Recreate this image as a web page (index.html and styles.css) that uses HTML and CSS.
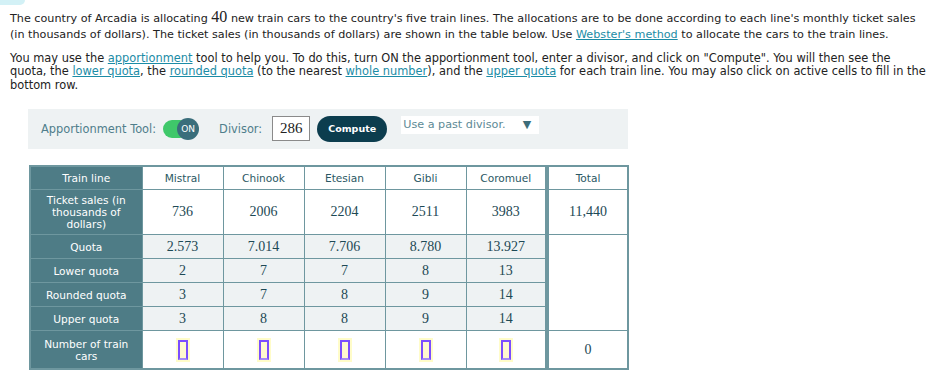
FILE: index.html
```html
<!DOCTYPE html>
<html lang="en">
<head>
  <meta charset="UTF-8" />
  <title>Webster's method</title>
  <link rel="stylesheet" href="styles.css">
</head>
<body>
  <div class="tab-edge"></div>

  <!-- Question text -->
  <p class="intro">The country of Arcadia is allocating <span class="num">40</span> new train cars to the country's five train lines. The allocations are to be done according to each line's monthly ticket sales (in thousands of dollars). The ticket sales (in thousands of dollars) are shown in the table below. Use <a href="#">Webster's method</a> to allocate the cars to the train lines.</p>

  <p class="help">You may use the <a href="#">apportionment</a> tool to help you. To do this, turn ON the apportionment tool, enter a divisor, and click on "Compute". You will then see the quota, the <a href="#">lower quota</a>, the <a href="#">rounded quota</a> (to the nearest <a href="#">whole number</a>), and the <a href="#">upper quota</a> for each train line. You may also click on active cells to fill in the bottom row.</p>

  <!-- Tool bar -->
  <div class="tool">
    <span class="tool-label">Apportionment Tool:</span>
    <span class="switch"><span class="knob">ON</span></span>
    <span class="tool-label divisor">Divisor:</span>
    <span class="divisor-box">286</span>
    <button class="compute">Compute</button>
    <span class="past">Use a past divisor.<span class="caret">&#9660;</span></span>
  </div>

  <!-- Apportionment table -->
  <table class="grid">
    <colgroup>
      <col class="c-head"><col class="c-line"><col class="c-line"><col class="c-line"><col class="c-line"><col class="c-line"><col class="c-total">
    </colgroup>
    <tr class="r-title">
      <th>Train line</th>
      <td class="name">Mistral</td><td class="name">Chinook</td><td class="name">Etesian</td><td class="name">Gibli</td><td class="name last">Coromuel</td><td class="name">Total</td>
    </tr>
    <tr class="r-sales">
      <th>Ticket sales (in thousands of dollars)</th>
      <td>736</td><td>2006</td><td>2204</td><td>2511</td><td class="last">3983</td><td>11,440</td>
    </tr>
    <tr class="r-calc">
      <th>Quota</th>
      <td>2.573</td><td>7.014</td><td>7.706</td><td>8.780</td><td class="last">13.927</td><td class="blank" rowspan="4"></td>
    </tr>
    <tr class="r-calc">
      <th>Lower quota</th>
      <td>2</td><td>7</td><td>7</td><td>8</td><td class="last">13</td>
    </tr>
    <tr class="r-calc">
      <th>Rounded quota</th>
      <td>3</td><td>7</td><td>8</td><td>9</td><td class="last">14</td>
    </tr>
    <tr class="r-calc">
      <th>Upper quota</th>
      <td>3</td><td>8</td><td>8</td><td>9</td><td class="last">14</td>
    </tr>
    <tr class="r-cars">
      <th>Number of train cars</th>
      <td><span class="cell-input"><span></span></span></td>
      <td><span class="cell-input"><span></span></span></td>
      <td><span class="cell-input"><span></span></span></td>
      <td><span class="cell-input"><span></span></span></td>
      <td class="last"><span class="cell-input"><span></span></span></td>
      <td>0</td>
    </tr>
  </table>
</body>
</html>
```

FILE: styles.css
```css
/* ---------- Page ---------- */
body {
  margin: 0;
  padding: 0 3px 0 10px;
  font-family: "DejaVu Sans", Verdana, sans-serif;
  font-size: 11.2px;
  color: #222;
  background: #fff;
}

.tab-edge {
  width: 25px;
  height: 5px;
  margin-left: -10px;
  background: #d3f1f6;
  border-bottom-right-radius: 6px;
}

p { margin: 0; }

.intro {
  margin-top: 4px;
  line-height: 16px;
}
.intro .num {
  font-family: "Liberation Serif", serif;
  font-size: 16px;
}
.help {
  margin-top: 9px;
  font-size: 11.4px;
  line-height: 13.3px;
}

a {
  color: #1b8ca6;
  text-decoration: underline;
}

/* ---------- Tool bar ---------- */
.tool {
  margin: 17px 0 0 18px;
  width: 587px;
  height: 40px;
  padding-left: 13px;
  background: #eef2f3;
  display: flex;
  align-items: center;
}
.tool-label {
  color: #4f7e8b;
  font-size: 11.4px;
}
.divisor { margin-left: 20px; }

.switch {
  position: relative;
  margin-left: 7px;
  width: 36px;
  height: 22px;
}
.switch::before {
  content: "";
  position: absolute;
  left: 0; top: 2px;
  width: 26px; height: 18px;
  border-radius: 9px;
  background: #3fc86a;
}
.knob {
  position: absolute;
  right: 0; top: 0;
  width: 22px; height: 22px;
  border-radius: 50%;
  background: #3a6e7b;
  color: #fff;
  font-size: 9px;
  display: flex;
  align-items: center;
  justify-content: center;
}

.divisor-box {
  margin-left: 10px;
  width: 36px;
  height: 23px;
  border: 1px solid #8a8a8a;
  background: #fff;
  font-family: "Liberation Serif", serif;
  font-size: 15px;
  display: flex;
  align-items: center;
  justify-content: center;
}

.compute {
  margin-left: 7px;
  width: 70px;
  height: 26px;
  border: none;
  border-radius: 13px;
  background: #0c3d4e;
  color: #fff;
  font-family: "DejaVu Sans", sans-serif;
  font-size: 9.5px;
  font-weight: 600;
}

.past {
  align-self: flex-start;
  margin: 7px 0 0 14px;
  width: 136px;
  height: 18px;
  padding-left: 2px;
  background: #fff;
  color: #5d8a96;
  font-size: 11.2px;
  display: flex;
  align-items: center;
}
.caret {
  margin-left: auto;
  margin-right: 8px;
  color: #3d6d7a;
  font-size: 11px;
}

/* ---------- Table ---------- */
.grid {
  margin: 16px 0 0 19px;
  border-collapse: collapse;
  table-layout: fixed;
  width: 600px;
  border: 2px solid #6e979f;
}
.c-head  { width: 112px; }
.c-line  { width: 81px; }
.c-total { width: 81px; }

.grid th, .grid td {
  border: 1px solid #6e979f;
  text-align: center;
  padding: 0 4px;
}
.grid th {
  background: #4e7c86;
  color: #fff;
  font-weight: normal;
  font-size: 10.6px;
  line-height: 12px;
  padding: 0 6px;
}
.grid td {
  font-family: "Liberation Serif", serif;
  font-size: 14px;
  color: #1d4955;
  background: #fff;
}
.grid td.name {
  font-family: "DejaVu Sans", sans-serif;
  font-size: 10.6px;
  color: #2b5864;
}
.grid td.last { border-right: 4px solid #6e979f; }

.r-title { height: 24px; }
.r-sales { height: 45px; }
.r-calc  { height: 24px; }
.r-calc td { background: #eef2f3; }
.r-calc td.blank { background: #fff; }
.r-cars  { height: 38px; }

.cell-input {
  display: inline-block;
  vertical-align: middle;
  padding: 2px;
  background: #fffcc9;
}
.cell-input span {
  display: block;
  width: 6px;
  height: 16px;
  border: 2px solid #7b4dff;
  border-bottom-color: #a58cf5;
  background: #fff9cf;
}
```
